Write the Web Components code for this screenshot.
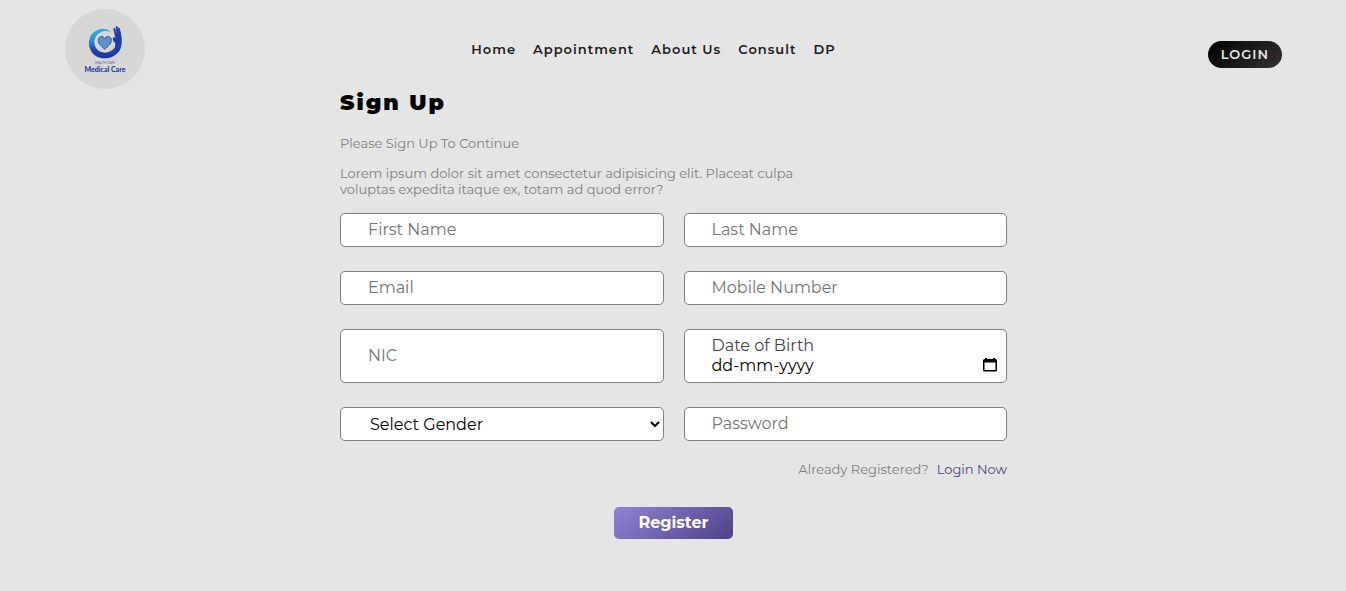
<!DOCTYPE html>
<html lang="en">
<head>
<meta charset="utf-8">
<meta name="viewport" content="width=device-width, initial-scale=1">
<title>Medical Care - Sign Up</title>
<style>
  body { margin: 0; min-height: 100vh; background: #e5e5e5; color: #000; font: 400 16px/20px Montserrat, Inter, sans-serif; }
</style>
</head>
<body>
<sign-up-page></sign-up-page>
<script>
const define = (name, html, setup) => {
  const template = document.createElement('template');
  template.innerHTML = html;
  customElements.define(name, class extends HTMLElement {
    constructor() {
      super();
      this.attachShadow({ mode: 'open' }).append(template.content.cloneNode(true));
    }
    connectedCallback() { if (setup) setup(this, this.shadowRoot); }
  });
};

define('brand-logo', `
<style>
  :host { display: block; width: 80px; height: 80px; }
  svg { display: block; width: 100%; height: 100%; }
  text { font-family: Lato, sans-serif; font-weight: 900; fill: #26389c; }
</style>
<svg viewBox="15 15 240 240" role="img" aria-label="Medical Care">
  <defs>
    <linearGradient id="ring" x1="0" y1="0" x2="0" y2="1">
      <stop offset="0" stop-color="#38afe0"/><stop offset=".42" stop-color="#2793d2"/><stop offset=".7" stop-color="#2349ad"/><stop offset="1" stop-color="#1b33a0"/>
    </linearGradient>
  </defs>
  <circle cx="135" cy="135" r="120" fill="#d7d7d7"/>
  <path fill="url(#ring)" d="M153 84C139 69 110 71 95 91C82 109 84 137 103 153C122 168 153 166 170 149C183 137 186 119 184 99C179 96 176 103 174 111C168 133 152 146 134 146C116 146 103 132 103 115C103 95 119 82 137 81C143 81 148 82 153 84Z"/>
  <path fill="#1e3ca8" d="M166 118C158 111 157 105 160 100C163 97 165 102 167 105L160 76C160 71 164 70 166 75L170 91L167 70C168 65 172 65 173 70L176 89L174 72C176 69 179 71 180 76C184 91 188 117 182 132C178 144 171 150 163 152Z"/>
  <path fill="#5e94cd" stroke="#2456a9" stroke-width="3" d="M134 136C126 128 115 121 115 109C115 96 129 94 134 104C139 94 154 96 154 109C154 121 142 128 134 136Z"/>
  <text x="135" y="180" font-size="9" text-anchor="middle" style="font-weight:400;fill:#5965a5">HEALTH CARE</text>
  <text x="135" y="204" font-size="21" text-anchor="middle">Medical Care</text>
</svg>`);

define('nav-link', `
<style>
  :host { display: block; }
  a { color: #1c1c1c; text-decoration: none; font-size: 13px; line-height: 16px; font-weight: 600; letter-spacing: 1px; }
</style>
<a href="#"><slot></slot></a>`, (host, root) => { root.querySelector('a').href = host.getAttribute('to') || '#'; });

define('site-header', `
<style>
  :host { display: grid; grid-template-columns: 1fr auto 1fr; align-items: center; padding: 9px 64px 0 65px; }
  nav { display: flex; gap: 17px; padding-right: 40px; }
  button { justify-self: end; margin-top: 10px; padding: 5px 13px; border: 0; border-radius: 14px;
    background: linear-gradient(135deg, #000, #333); color: #e5e5e5;
    font: 600 13px/17px Montserrat, Inter, sans-serif; letter-spacing: 1px; cursor: pointer; }
</style>
<brand-logo></brand-logo>
<nav aria-label="Main">
  <nav-link to="#home">Home</nav-link>
  <nav-link to="#appointment">Appointment</nav-link>
  <nav-link to="#about">About Us</nav-link>
  <nav-link to="#consult">Consult</nav-link>
  <nav-link to="#dp">DP</nav-link>
</nav>
<button type="button">LOGIN</button>`);

define('text-field', `
<style>
  :host { display: flex; }
  input { flex: 1; min-width: 0; box-sizing: border-box; min-height: 34px; padding: 6px 27px; border: 1px solid gray; border-radius: 5px;
    background: #fff; color: #000; font: inherit; }
  input::placeholder { color: #757575; opacity: 1; }
</style>
<input>`, (host, root) => {
  const input = root.querySelector('input');
  input.type = host.getAttribute('type') || 'text';
  input.placeholder = host.getAttribute('label');
  input.setAttribute('aria-label', host.getAttribute('label'));
});

define('date-field', `
<style>
  :host { display: grid; grid-template-columns: 1fr auto; padding: 6px 9px 6px 27px; border: 1px solid gray; border-radius: 5px; background: #fff; }
  label { grid-column: 1 / -1; color: #444; }
  input { min-width: 0; padding: 0; border: 0; outline: 0; background: none; color: #000; font: inherit; }
  input::placeholder { color: #000; opacity: 1; }
  button { display: flex; align-items: start; padding: 1px 0 0; border: 0; background: none; color: #000; cursor: pointer; }
  svg { display: block; width: 14px; height: 16px; }
</style>
<label for="date">Date of Birth</label>
<input id="date" placeholder="dd-mm-yyyy" inputmode="numeric">
<button type="button" aria-label="Choose date">
  <svg viewBox="0 0 14 16"><path fill="currentColor" fill-rule="evenodd" d="M2 1h2v1h6V1h2v1h.5A1.5 1.5 0 0 1 14 3.500V13a1.500 1.500 0 0 1-1.500 1.500h-11A1.500 1.500 0 0 1 0 13V3.500A1.500 1.500 0 0 1 1.500 2H2ZM1.500 5.500V13h11V5.500Z"/></svg>
</button>`);

define('gender-field', `
<style>
  :host { display: flex; }
  select { flex: 1; min-width: 0; height: 34px; padding: 0 0 0 25px; border: 1px solid gray; border-radius: 5px; background: #fff; color: #000; font: inherit; }
</style>
<select aria-label="Gender"><option>Select Gender</option><option>Male</option><option>Female</option></select>`);

define('sign-up-form', `
<style>
  :host { display: block; max-width: 667px; margin: 0 auto; }
  h1 { margin: 0; font-size: 22px; line-height: 28px; font-weight: 900; letter-spacing: 2px; }
  p { margin: 0; color: gray; font-size: 13px; line-height: 16px; }
  .lead { margin: 18px 0 14px; }
  .intro { max-width: 480px; }
  form { margin-top: 16px; }
  .fields { display: grid; grid-template-columns: repeat(2, minmax(0, 1fr)); gap: 24px 20px; }
  .already { display: flex; justify-content: flex-end; gap: 8px; margin-top: 20px; }
  a { color: #4f4187; text-decoration: none; }
  .submit { display: block; margin: 30px auto 0; padding: 6px 24px; border: 0; border-radius: 5px;
    background: linear-gradient(140deg, #9083d5, #504189); color: #fff; font: inherit; font-weight: 700; cursor: pointer; }
</style>
<h1>Sign Up</h1>
<p class="lead">Please Sign Up To Continue</p>
<p class="intro">Lorem ipsum dolor sit amet consectetur adipisicing elit. Placeat culpa voluptas expedita itaque ex, totam ad quod error?</p>
<form>
  <div class="fields">
    <text-field label="First Name"></text-field>
    <text-field label="Last Name"></text-field>
    <text-field label="Email" type="email"></text-field>
    <text-field label="Mobile Number" type="tel"></text-field>
    <text-field label="NIC"></text-field>
    <date-field></date-field>
    <gender-field></gender-field>
    <text-field label="Password" type="password"></text-field>
  </div>
  <p class="already"><span>Already Registered?</span><a href="#login">Login Now</a></p>
  <button class="submit" type="submit">Register</button>
</form>`);

define('sign-up-page', `
<style>
  :host { display: block; padding-bottom: 40px; }
  main { padding-left: 1px; }
</style>
<header><site-header></site-header></header>
<main><sign-up-form></sign-up-form></main>`);
</script>
</body>
</html>
